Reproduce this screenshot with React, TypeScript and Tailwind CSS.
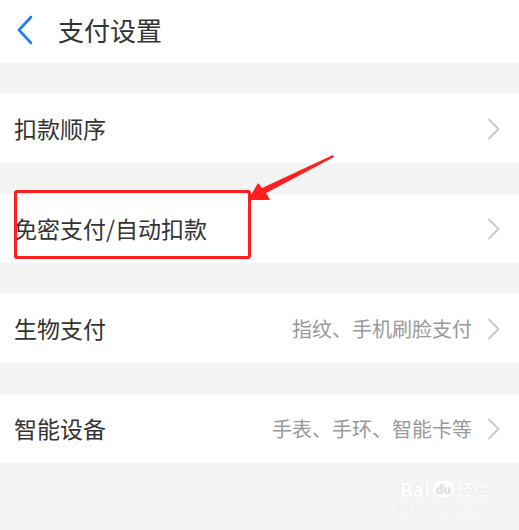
import React from 'react';

const rows = [
  { title: '扣款顺序', hint: '' },
  { title: '免密支付/自动扣款', hint: '' },
  { title: '生物支付', hint: '指纹、手机刷脸支付' },
  { title: '智能设备', hint: '手表、手环、智能卡等' },
];

function Chevron() {
  return (
    <svg width="14" height="24" viewBox="0 0 14 24" fill="none" className="shrink-0">
      <path d="M2 2.5l9.5 9.5-9.5 9.5" stroke="#c7c7c7" strokeWidth="1.8" strokeLinecap="round" strokeLinejoin="round" />
    </svg>
  );
}

export default function App() {
  return (
    <div
      className="relative w-[519px] h-[530px] overflow-hidden bg-[#f4f4f4] text-[#333]"
      style={{ fontFamily: '"Noto Sans CJK SC", "Noto Sans", sans-serif' }}
    >
      {/* Header */}
      <div className="h-[63px] bg-white flex items-center pb-[4px]">
        <svg width="20" height="30" viewBox="0 0 20 30" fill="none" className="ml-[15px]">
          <path d="M16 2L4 15l12 13" stroke="#1e7ff0" strokeWidth="2.6" strokeLinecap="round" strokeLinejoin="round" />
        </svg>
        <span className="ml-[23px] text-[26px] leading-none text-[#333]">支付设置</span>
      </div>

      {/* Rows */}
      <div className="flex flex-col gap-[31px] pt-[31px]">
        {rows.map((row) => (
          <div key={row.title} className="h-[69px] bg-white flex items-center pl-[14px] pr-[18px]">
            <span className="text-[23px] leading-none">{row.title}</span>
            <div className="ml-auto flex items-center gap-[15px]">
              {row.hint && <span className="text-[20px] leading-none text-[#999]">{row.hint}</span>}
              <Chevron />
            </div>
          </div>
        ))}
      </div>

      {/* Annotation box */}
      <div className="absolute left-[14px] top-[190px] w-[237px] h-[69px] border-[3px] border-[#ff1f1f] rounded-[3px]" />

      {/* Annotation arrow */}
      <svg className="absolute left-0 top-0" width="519" height="530" viewBox="0 0 519 530">
        <polygon points="333,155 334,157 266,193 270,200 248,200 258,183 262,188" fill="#ff1f1f" />
      </svg>

      {/* Watermark */}
      <div className="absolute left-[396px] top-[478px] flex flex-col items-center text-white">
        <div className="flex items-center h-[22px] text-[19px] leading-[22px] font-bold" style={{ textShadow: '0 0 1px #cfcfcf' }}>
          <span>Bai</span>
          <span className="ml-[3px] text-[12px] leading-[16px] bg-white text-[#e2e2e2] rounded-full px-[3px]">du</span>
          <span className="ml-[3px] text-[15px]">经验</span>
        </div>
        <span className="text-[11px] leading-[13px] mt-[3px]" style={{ textShadow: '0 0 1px #cfcfcf' }}>jingyan.baidu.com</span>
      </div>
    </div>
  );
}
